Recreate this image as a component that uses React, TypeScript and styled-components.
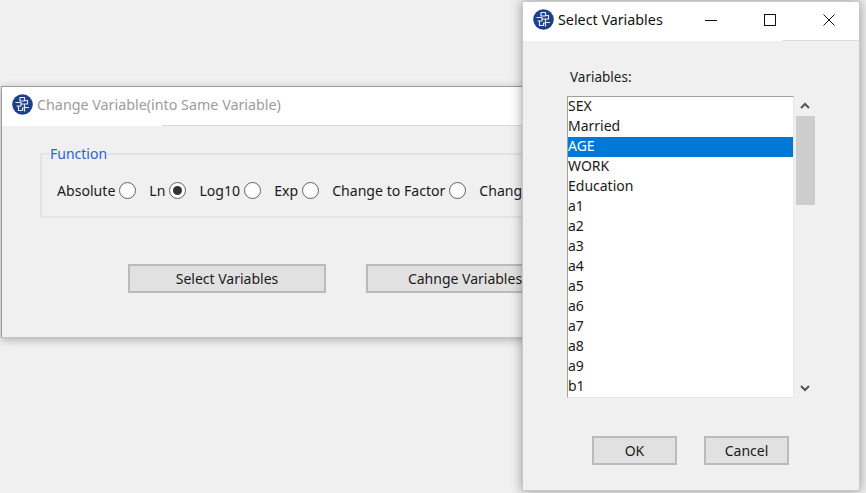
import React from 'react';
import styled, { createGlobalStyle } from 'styled-components';

const GlobalStyle = createGlobalStyle`
	html, body {
		margin: 0;
		padding: 0;
		background: #f0f0f0;
		overflow: hidden;
	}
	* {
		box-sizing: border-box;
	}
`;

const FONT = `"Noto Sans", "Open Sans", "Liberation Sans", sans-serif`;

const VARIABLES = ['SEX', 'Married', 'AGE', 'WORK', 'Education', 'a1', 'a2', 'a3', 'a4', 'a5', 'a6', 'a7', 'a8', 'a9', 'b1'];

const AppIcon = () => (
	<svg width="21" height="21" viewBox="0 0 21 21">
		<circle cx="10.5" cy="10.5" r="10.3" fill="#1d3f8c" />
		<g fill="none" stroke="#e3eaf6" strokeWidth="1.2" strokeLinejoin="round">
			<path d="M8 3.5h4.5v3.5H8zM3.5 8.5H9V12H4.5M9 10h6.5V6.5h-3M12.5 10v3.5H17M6.5 12v4.5h4V14h2v3.5" />
		</g>
	</svg>
);

const Desktop = styled.div`
	position: relative;
	width: 866px;
	height: 493px;
	overflow: hidden;
	background: #f0f0f0;
	font-family: ${FONT};
	font-size: 14px;
	color: #1a1a1a;
`;

const BackWindow = styled.section`
	position: absolute;
	left: 1px;
	top: 86px;
	width: 640px;
	height: 252px;
	background: #f0f0f0;
	border: 1px solid #9a9a9a;
	border-bottom-color: #c4c4c4;
	box-shadow: 0 2px 8px rgba(0, 0, 0, 0.28);
`;

const FrontWindow = styled.section`
	position: absolute;
	left: 522px;
	top: 1px;
	width: 338px;
	height: 490px;
	background: #f0f0f0;
	border: 1px solid #c8c8c8;
	box-shadow: 0 0 11px rgba(0, 0, 0, 0.38);
	display: flex;
	flex-direction: column;
`;

const TitleBar = styled.header`
	height: 38px;
	flex: none;
	background: #fff;
	display: flex;
	align-items: center;
	padding: 0 0 3px 10px;
	gap: 4px;
`;

const TitleRule = styled.div<{ $start: number }>`
	height: 1px;
	flex: none;
	background: linear-gradient(to right, #fff ${(p) => p.$start}px, #dadada ${(p) => p.$start}px);
`;

const TitleText = styled.span<{ $inactive?: boolean }>`
	font-size: 14.3px;
	color: ${(p) => (p.$inactive ? '#9c9c9c' : '#111')};
	white-space: nowrap;
`;

const WindowControls = styled.div`
	margin-left: auto;
	display: flex;
	height: 100%;
	padding-right: 1px;
`;

const ControlButton = styled.span`
	width: 59px;
	display: flex;
	align-items: center;
	justify-content: center;
`;

const BackBody = styled.div`
	padding: 21px 0 0 38px;
	display: flex;
	flex-direction: column;
`;

const GroupBox = styled.fieldset`
	margin: 0;
	width: 640px;
	height: 71px;
	padding: 20px 0 0 15px;
	border: 2px solid #e4e4e4;
`;

const GroupLegend = styled.legend`
	margin-left: -8px;
	padding: 0 1px;
	font-size: 14px;
	line-height: 14px;
	color: #2f5fd8;
`;

const RadioRow = styled.div`
	display: flex;
	align-items: center;
	gap: 13px;
	font-size: 14.1px;
`;

const RadioItem = styled.label`
	display: flex;
	align-items: center;
	gap: 4px;
	white-space: nowrap;
`;

const RadioMark = styled.span<{ $on?: boolean }>`
	width: 17px;
	height: 17px;
	border-radius: 50%;
	border: 1.5px solid #606060;
	background: #fff;
	display: flex;
	align-items: center;
	justify-content: center;
	&::after {
		content: '';
		width: 9px;
		height: 9px;
		border-radius: 50%;
		background: ${(p) => (p.$on ? '#333' : 'transparent')};
	}
`;

const PushButton = styled.button<{ $width: number; $height: number }>`
	width: ${(p) => p.$width}px;
	height: ${(p) => p.$height}px;
	padding: 0;
	background: #e1e1e1;
	border: 2px solid #bababa;
	font-family: ${FONT};
	font-size: 14px;
	color: #1a1a1a;
	flex: none;
`;

const BackButtons = styled.div`
	display: flex;
	gap: 40px;
	margin: 46px 0 0 88px;
`;

const FrontBody = styled.div`
	flex: 1;
	padding: 28px 0 0 44px;
	display: flex;
	flex-direction: column;
`;

const FieldLabel = styled.div`
	font-size: 13.5px;
	line-height: 17px;
	margin-left: 3px;
	margin-bottom: 10px;
	color: #222;
`;

const ListRow = styled.div`
	display: flex;
	align-items: stretch;
`;

const ListBox = styled.ul`
	list-style: none;
	margin: 0;
	padding: 0;
	width: 227px;
	height: 302px;
	overflow: hidden;
	background: #fff;
	border: 1px solid #a0a0a0;
	border-right-color: #e8e8e8;
	border-bottom-color: #e8e8e8;
`;

const ListItem = styled.li<{ $selected?: boolean }>`
	height: 20px;
	line-height: 17px;
	font-size: 14px;
	background: ${(p) => (p.$selected ? '#0078d7' : 'transparent')};
	color: ${(p) => (p.$selected ? '#fff' : '#1a1a1a')};
`;

const ScrollBar = styled.div`
	width: 20px;
	margin-left: 1px;
	display: flex;
	flex-direction: column;
	align-items: center;
`;

const ScrollArrow = styled.span<{ $down?: boolean }>`
	height: 20px;
	flex: none;
	display: flex;
	align-items: center;
	justify-content: center;
	margin-top: ${(p) => (p.$down ? 'auto' : '0')};
`;

const ScrollThumb = styled.div`
	width: 19px;
	height: 89px;
	background: #cdcdcd;
`;

const FrontButtons = styled.div`
	display: flex;
	gap: 27px;
	margin: 38px 0 0 25px;
`;

const Chevron = ({ down }: { down?: boolean }) => (
	<svg width="10" height="8" viewBox="0 0 10 8">
		<path d={down ? 'M1 2l4 4 4-4' : 'M1 6l4-4 4 4'} fill="none" stroke="#555" strokeWidth="2" />
	</svg>
);

const FUNCTIONS = [
	{ label: 'Absolute' },
	{ label: 'Ln', on: true },
	{ label: 'Log10' },
	{ label: 'Exp' },
	{ label: 'Change to Factor' },
	{ label: 'Chang' },
];

const App = () => (
	<Desktop>
		<GlobalStyle />
		<BackWindow>
			<TitleBar>
				<AppIcon />
				<TitleText $inactive>Change Variable(into Same Variable)</TitleText>
			</TitleBar>
			<TitleRule $start={160} />
			<BackBody>
				<GroupBox>
					<GroupLegend>Function</GroupLegend>
					<RadioRow>
						{FUNCTIONS.map((f) => (
							<RadioItem key={f.label}>
								{f.label}
								<RadioMark $on={f.on} />
							</RadioItem>
						))}
					</RadioRow>
				</GroupBox>
				<BackButtons>
					<PushButton $width={198} $height={29}>Select Variables</PushButton>
					<PushButton $width={198} $height={29}>Cahnge Variables</PushButton>
				</BackButtons>
			</BackBody>
		</BackWindow>
		<FrontWindow>
			<TitleBar>
				<AppIcon />
				<TitleText>Select Variables</TitleText>
				<WindowControls>
					<ControlButton>
						<svg width="12" height="12" viewBox="0 0 12 12">
							<path d="M0 6.5h12" stroke="#111" fill="none" />
						</svg>
					</ControlButton>
					<ControlButton>
						<svg width="12" height="12" viewBox="0 0 12 12">
							<rect x="0.5" y="0.5" width="11" height="11" stroke="#111" fill="none" />
						</svg>
					</ControlButton>
					<ControlButton>
						<svg width="12" height="12" viewBox="0 0 12 12">
							<path d="M0.5 0.5l11 11M11.5 0.5l-11 11" stroke="#111" fill="none" />
						</svg>
					</ControlButton>
				</WindowControls>
			</TitleBar>
			<TitleRule $start={260} />
			<FrontBody>
				<FieldLabel>Variables:</FieldLabel>
				<ListRow>
					<ListBox>
						{VARIABLES.map((v) => (
							<ListItem key={v} $selected={v === 'AGE'}>
								{v}
							</ListItem>
						))}
					</ListBox>
					<ScrollBar>
						<ScrollArrow>
							<Chevron />
						</ScrollArrow>
						<ScrollThumb />
						<ScrollArrow $down>
							<Chevron down />
						</ScrollArrow>
					</ScrollBar>
				</ListRow>
				<FrontButtons>
					<PushButton $width={85} $height={29}>OK</PushButton>
					<PushButton $width={85} $height={29}>Cancel</PushButton>
				</FrontButtons>
			</FrontBody>
		</FrontWindow>
	</Desktop>
);

export default App;
